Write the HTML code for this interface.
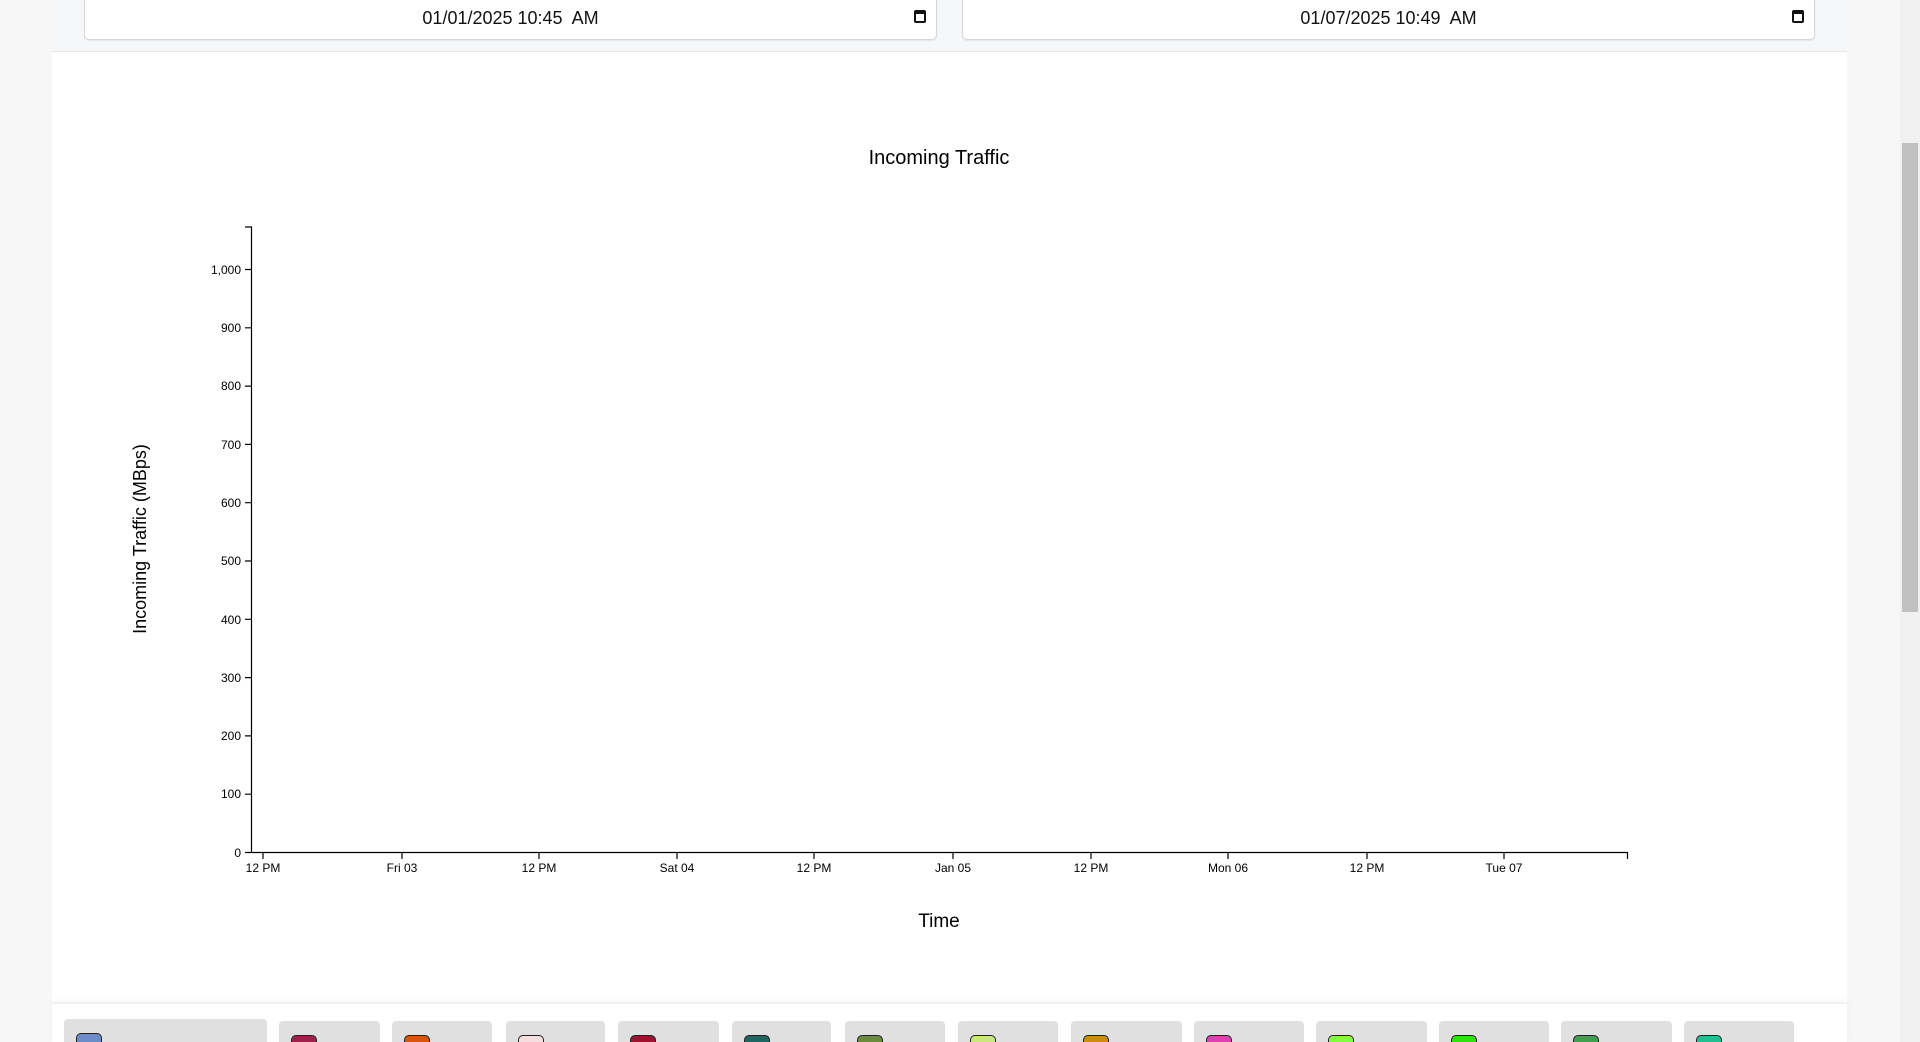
<!DOCTYPE html>
<html style="overflow:hidden;height:1042px"><head><meta charset="utf-8"><style>
body{margin:0;width:1920px;height:1042px;overflow:hidden;background:#f7f7f7;font-family:"Liberation Sans",sans-serif;position:relative}
.top{position:absolute;left:52px;top:0;width:1795px;height:51px;background:#f6f7f8;border-bottom:1px solid #e6e6e6}
.inp{position:absolute;top:-2px;height:40px;background:#fff;border:1px solid #d8d8d8;border-radius:0 0 5px 5px;box-shadow:0 1px 1px rgba(0,0,0,.08);font-size:18px;text-align:center;line-height:38px;color:#111}
.cal{position:absolute;right:10px;top:11px;width:12px;height:13px;border:2px solid #111;border-top-width:4px;border-radius:2px;box-sizing:border-box}
.card{position:absolute;left:52px;top:52px;width:1795px;height:950px;background:#fff}
.leg{position:absolute;left:52px;top:1004px;width:1795px;height:38px;background:#fff;overflow:hidden;box-shadow:0 -3px 6px rgba(0,0,0,.04)}
.item{position:absolute;top:17px;height:30px;background:#e0e0e0;border-radius:4px}
.sw{position:absolute;left:12px;top:14px;width:26px;height:20px;border:1px solid #222;border-radius:5px;box-sizing:border-box}
.sb{position:absolute;left:1900px;top:0;width:20px;height:1042px;background:#f1f1f1}
.th{position:absolute;left:2px;top:143px;width:16px;height:469px;background:#c1c1c1}
</style></head><body>
<div class="top">
<div class="inp" style="left:32px;width:851px">01/01/2025 10:45&nbsp; AM<div class="cal"></div></div>
<div class="inp" style="left:910px;width:851px">01/07/2025 10:49&nbsp; AM<div class="cal"></div></div>
</div>
<div class="card"></div>
<svg style="position:absolute;left:0;top:0" width="1900" height="1042" font-family="Liberation Sans, sans-serif">
<text x="939" y="164" font-size="20" text-anchor="middle">Incoming Traffic</text>
<text transform="translate(146,539) rotate(-90)" font-size="18" text-anchor="middle">Incoming Traffic (MBps)</text>
<text x="939" y="927" font-size="19" text-anchor="middle">Time</text>
<g stroke="#000" stroke-width="1.2" fill="none">
<path d="M245,227H251.5V852.5H1627.5V859"/>
<path d="M245,852.5H251 M245,794.2H251 M245,735.9H251 M245,677.6H251 M245,619.3H251 M245,561H251 M245,502.7H251 M245,444.4H251 M245,386.1H251 M245,327.8H251 M245,269.5H251"/>
<path d="M263,852V859 M402,852V859 M539,852V859 M677,852V859 M814,852V859 M953,852V859 M1091,852V859 M1228,852V859 M1367,852V859 M1504,852V859"/>
</g>
<g font-size="12" text-anchor="end">
<text x="241" y="857">0</text><text x="241" y="798">100</text><text x="241" y="740">200</text><text x="241" y="682">300</text><text x="241" y="624">400</text><text x="241" y="565">500</text><text x="241" y="507">600</text><text x="241" y="449">700</text><text x="241" y="390">800</text><text x="241" y="332">900</text><text x="241" y="274">1,000</text>
</g>
<g font-size="12" text-anchor="middle">
<text x="263" y="872">12 PM</text><text x="402" y="872">Fri 03</text><text x="539" y="872">12 PM</text><text x="677" y="872">Sat 04</text><text x="814" y="872">12 PM</text><text x="953" y="872">Jan 05</text><text x="1091" y="872">12 PM</text><text x="1228" y="872">Mon 06</text><text x="1367" y="872">12 PM</text><text x="1504" y="872">Tue 07</text>
</g>
</svg>
<div class="leg">
<div class="item" style="left:12px;width:203px;top:15px"><div class="sw" style="background:#6a8cc8"></div></div>
<div class="item" style="left:227px;width:101px"><div class="sw" style="background:#a0204c"></div></div>
<div class="item" style="left:340px;width:100px"><div class="sw" style="background:#d9540e"></div></div>
<div class="item" style="left:454px;width:99px"><div class="sw" style="background:#f6dde0"></div></div>
<div class="item" style="left:566px;width:101px"><div class="sw" style="background:#a01230"></div></div>
<div class="item" style="left:680px;width:99px"><div class="sw" style="background:#1f6560"></div></div>
<div class="item" style="left:793px;width:100px"><div class="sw" style="background:#6a8a3c"></div></div>
<div class="item" style="left:906px;width:100px"><div class="sw" style="background:#c8e878"></div></div>
<div class="item" style="left:1019px;width:111px"><div class="sw" style="background:#d08a10"></div></div>
<div class="item" style="left:1142px;width:110px"><div class="sw" style="background:#e040b0"></div></div>
<div class="item" style="left:1264px;width:111px"><div class="sw" style="background:#80ff40"></div></div>
<div class="item" style="left:1387px;width:110px"><div class="sw" style="background:#30e010"></div></div>
<div class="item" style="left:1509px;width:111px"><div class="sw" style="background:#40a050"></div></div>
<div class="item" style="left:1632px;width:110px"><div class="sw" style="background:#20c090"></div></div>
</div>
<div class="sb"><div class="th"></div></div>
</body></html>
